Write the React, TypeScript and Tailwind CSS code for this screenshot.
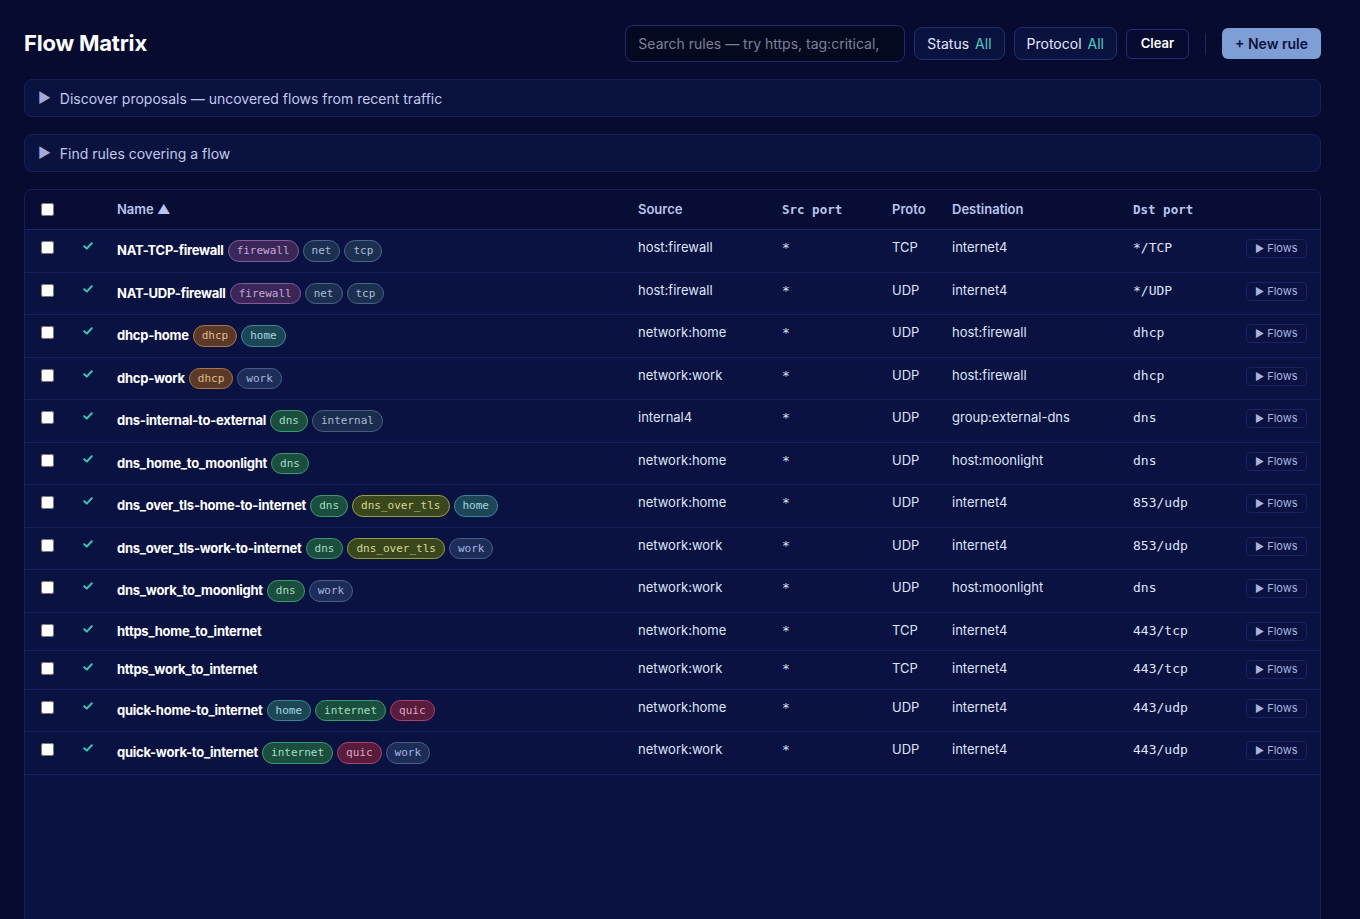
import React from 'react';

type Rule = {
    name: string;
    tags: string[];
    source: string;
    srcPort: string;
    proto: string;
    destination: string;
    dstPort: string;
};

const RULES: Rule[] = [
    { name: 'NAT-TCP-firewall', tags: ['firewall', 'net', 'tcp'], source: 'host:firewall', srcPort: '*', proto: 'TCP', destination: 'internet4', dstPort: '*/TCP' },
    { name: 'NAT-UDP-firewall', tags: ['firewall', 'net', 'tcp'], source: 'host:firewall', srcPort: '*', proto: 'UDP', destination: 'internet4', dstPort: '*/UDP' },
    { name: 'dhcp-home', tags: ['dhcp', 'home'], source: 'network:home', srcPort: '*', proto: 'UDP', destination: 'host:firewall', dstPort: 'dhcp' },
    { name: 'dhcp-work', tags: ['dhcp', 'work'], source: 'network:work', srcPort: '*', proto: 'UDP', destination: 'host:firewall', dstPort: 'dhcp' },
    { name: 'dns-internal-to-external', tags: ['dns', 'internal'], source: 'internal4', srcPort: '*', proto: 'UDP', destination: 'group:external-dns', dstPort: 'dns' },
    { name: 'dns_home_to_moonlight', tags: ['dns'], source: 'network:home', srcPort: '*', proto: 'UDP', destination: 'host:moonlight', dstPort: 'dns' },
    { name: 'dns_over_tls-home-to-internet', tags: ['dns', 'dns_over_tls', 'home'], source: 'network:home', srcPort: '*', proto: 'UDP', destination: 'internet4', dstPort: '853/udp' },
    { name: 'dns_over_tls-work-to-internet', tags: ['dns', 'dns_over_tls', 'work'], source: 'network:work', srcPort: '*', proto: 'UDP', destination: 'internet4', dstPort: '853/udp' },
    { name: 'dns_work_to_moonlight', tags: ['dns', 'work'], source: 'network:work', srcPort: '*', proto: 'UDP', destination: 'host:moonlight', dstPort: 'dns' },
    { name: 'https_home_to_internet', tags: [], source: 'network:home', srcPort: '*', proto: 'TCP', destination: 'internet4', dstPort: '443/tcp' },
    { name: 'https_work_to_internet', tags: [], source: 'network:work', srcPort: '*', proto: 'TCP', destination: 'internet4', dstPort: '443/tcp' },
    { name: 'quick-home-to_internet', tags: ['home', 'internet', 'quic'], source: 'network:home', srcPort: '*', proto: 'UDP', destination: 'internet4', dstPort: '443/udp' },
    { name: 'quick-work-to_internet', tags: ['internet', 'quic', 'work'], source: 'network:work', srcPort: '*', proto: 'UDP', destination: 'internet4', dstPort: '443/udp' },
];

// tag colour per tag name
const TAG_STYLES: Record<string, string> = {
    firewall: 'bg-[#3a2657] border-[#85599f] text-[#c9a6df]',
    net: 'bg-[#1c2f4f] border-[#46658c] text-[#a7bedb]',
    tcp: 'bg-[#1c2f4f] border-[#46658c] text-[#a7bedb]',
    dhcp: 'bg-[#5a3a26] border-[#ae7447] text-[#e3b78e]',
    home: 'bg-[#1c4656] border-[#39889a] text-[#a3d7e0]',
    work: 'bg-[#1d2d57] border-[#485c8f] text-[#a2b5e1]',
    dns: 'bg-[#1c4e3f] border-[#389c6d] text-[#a2dfbf]',
    internal: 'bg-[#1c2c4e] border-[#485c7f] text-[#a9b8d7]',
    dns_over_tls: 'bg-[#3a471d] border-[#98a03e] text-[#d7d88e]',
    internet: 'bg-[#1c4e3f] border-[#389c6d] text-[#a2dfbf]',
    quic: 'bg-[#571d3a] border-[#ae3f70] text-[#e2a1c2]',
};

const Tag: React.FC<{ label: string }> = ({ label }) => (
    <span className={`inline-flex items-center h-[21.5px] px-2 rounded-full border font-['DejaVu_Sans_Mono',monospace] text-[11px] leading-none ${TAG_STYLES[label]}`}>
        {label}
    </span>
);

const FilterButton: React.FC<{ label: string }> = ({ label }) => (
    <button className="h-[33px] px-3 rounded-lg border border-[#212d74] bg-[#0a1240] text-[14px] text-[#e3e8ff] flex items-center gap-[6px]">
        {label}
        <span className="text-[#4fcfc2]">All</span>
    </button>
);

const Disclosure: React.FC<{ label: string }> = ({ label }) => (
    <div className="flex items-center gap-[9px] h-[38px] px-[13px] rounded-lg border border-[#16215a] bg-[#0a1240] text-[14px] text-[#c3c9ea]">
        <span className="text-[14px] leading-none text-[#a3aad8]">▶</span>
        {label}
    </div>
);

const CheckMark = () => (
    <svg width="10" height="8" viewBox="0 0 10 8" fill="none">
        <path d="M1.2 4.2 L3.8 6.6 L8.8 1.2" stroke="#3cc3b4" strokeWidth="2" strokeLinecap="round" strokeLinejoin="round" />
    </svg>
);

export default function App() {
    return (
        <div className="min-h-screen bg-[#070b2f] pl-6 pr-[39px] pt-[25px] pb-6 font-['Inter',sans-serif] text-[#dfe4f6]">
            <div className="flex items-center">
                <h1 className="text-[22px] font-bold text-white tracking-[-0.2px]">Flow Matrix</h1>
                <div className="ml-auto flex items-center">
                    <input
                        className="w-[280px] h-[37px] pl-3 pr-6 rounded-lg border border-[#1f2a70] bg-[#050920] text-[14px] text-white placeholder:text-[#7c8196] outline-none"
                        placeholder="Search rules — try https, tag:critical, proto:udp"
                    />
                    <div className="ml-[9px] flex items-center gap-[9px]">
                        <FilterButton label="Status" />
                        <FilterButton label="Protocol" />
                        <button className="h-[30px] w-[63px] rounded-md border border-[#212d74] bg-[#070b2f] text-[13px] font-semibold text-white">Clear</button>
                    </div>
                    <div className="w-px h-[22px] bg-[#1d2765] mx-4" />
                    <button className="h-[31px] px-[13px] rounded-md bg-[#7f9ed5] text-[14px] font-semibold text-[#0b1240]">+ New rule</button>
                </div>
            </div>

            <div className="mt-[17px] flex flex-col gap-[17px]">
                <Disclosure label="Discover proposals — uncovered flows from recent traffic" />
                <Disclosure label="Find rules covering a flow" />

                <div className="min-h-[740px] rounded-lg border border-[#16215a] bg-[#0a1242] overflow-hidden">
                    <table className="w-full table-fixed border-collapse text-left text-[13px]">
                        <colgroup>
                            <col className="w-[46px]" />
                            <col className="w-[35px]" />
                            <col />
                            <col className="w-[144px]" />
                            <col className="w-[110px]" />
                            <col className="w-[60px]" />
                            <col className="w-[181px]" />
                            <col className="w-[113px]" />
                            <col className="w-[86px]" />
                        </colgroup>
                        <thead className="bg-[#080d36] text-[#b9c4ec]">
                            <tr className="border-b border-[#1a2668]">
                                <th className="pl-4 py-[10px] align-middle">
                                    <input type="checkbox" className="m-0 block w-[13px] h-[13px]" />
                                </th>
                                <th />
                                <th className="pl-[11px] pr-3 py-[10px] font-semibold leading-[19px]">
                                    Name <span className="text-[13px]">▲</span>
                                </th>
                                <th className="px-3 py-[10px] font-semibold leading-[19px]">Source</th>
                                <th className="px-3 py-[10px] font-bold leading-[19px] font-['DejaVu_Sans_Mono',monospace] text-[12.5px]">Src port</th>
                                <th className="px-3 py-[10px] font-semibold leading-[19px]">Proto</th>
                                <th className="px-3 py-[10px] font-semibold leading-[19px]">Destination</th>
                                <th className="px-3 py-[10px] font-bold leading-[19px] font-['DejaVu_Sans_Mono',monospace] text-[12.5px]">Dst port</th>
                                <th />
                            </tr>
                        </thead>
                        <tbody>
                            {RULES.map(rule => (
                                <tr key={rule.name} className="border-b border-[#16215e]">
                                    <td className="pl-4 pt-[11px] align-top">
                                        <input type="checkbox" className="m-0 block w-[13px] h-[13px]" />
                                    </td>
                                    <td className="pl-3 pt-[12px] align-top">
                                        <CheckMark />
                                    </td>
                                    <td className="pl-[11px] pr-3 py-2 align-middle">
                                        <div className="flex flex-wrap items-center gap-1 min-h-[21.5px]">
                                            <span className="font-bold text-white leading-[21px] tracking-[-0.25px]">{rule.name}</span>
                                            {rule.tags.map(t => (
                                                <span key={t} className="my-[2px]">
                                                    <Tag label={t} />
                                                </span>
                                            ))}
                                        </div>
                                    </td>
                                    <td className="px-3 pt-[7px] align-top leading-[21px]">{rule.source}</td>
                                    <td className="px-3 pt-[7px] align-top leading-[21px] font-['DejaVu_Sans_Mono',monospace]">{rule.srcPort}</td>
                                    <td className="px-3 pt-[7px] align-top leading-[21px]">{rule.proto}</td>
                                    <td className="px-3 pt-[7px] align-top leading-[21px]">{rule.destination}</td>
                                    <td className="px-3 pt-[7px] align-top leading-[21px] font-['DejaVu_Sans_Mono',monospace]">{rule.dstPort}</td>
                                    <td className="px-3 pt-[9px] align-top">
                                        <button className="flex items-center gap-[3px] h-[19px] px-2 rounded border border-[#18235f] text-[11px] text-[#a8b4df]">
                                            <span className="text-[10px]">▶</span>
                                            Flows
                                        </button>
                                    </td>
                                </tr>
                            ))}
                        </tbody>
                    </table>
                </div>
            </div>
        </div>
    );
}
